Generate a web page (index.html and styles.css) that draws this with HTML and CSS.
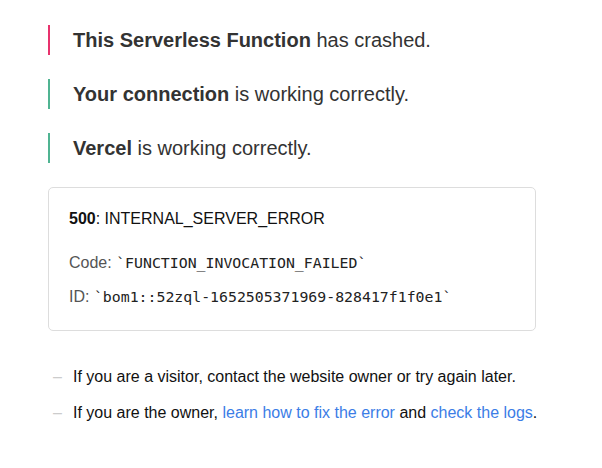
FILE: index.html
```html
<!DOCTYPE html>
<html>
<head>
<meta charset="utf-8">
<link rel="stylesheet" href="styles.css">
</head>
<body>
<main class="page">
  <section class="statuses">
    <p class="status status-bad"><strong>This Serverless Function</strong> has crashed.</p>
    <p class="status status-ok"><strong>Your connection</strong> is working correctly.</p>
    <p class="status status-ok"><strong>Vercel</strong> is working correctly.</p>
  </section>
  <section class="devinfo">
    <p class="error-code"><strong>500</strong>: INTERNAL_SERVER_ERROR</p>
    <p class="devinfo-line devinfo-code">Code: <code>`FUNCTION_INVOCATION_FAILED`</code></p>
    <p class="devinfo-line">ID: <code>`bom1::52zql-1652505371969-828417f1f0e1`</code></p>
  </section>
  <ul class="help">
    <li>If you are a visitor, contact the website owner or try again later.</li>
    <li>If you are the owner, <a href="#">learn how to fix the error</a> and <a href="#">check the logs</a>.</li>
  </ul>
</main>
</body>
</html>
```

FILE: styles.css
```css
html, body {
  margin: 0;
  padding: 0;
  background: #fff;
}
body {
  font-family: "Liberation Sans", Arial, sans-serif;
  color: #333;
}
.page {
  width: 488px;
  margin-left: 48px;
  padding-top: 25px;
}
.statuses {
  display: flex;
  flex-direction: column;
  gap: 24px;
}
.status {
  margin: 0;
  height: 30px;
  line-height: 30px;
  padding-left: 23px;
  border-left: 2px solid #50b492;
  font-size: 20px;
  color: #333;
}
.status strong {
  font-weight: bold;
}
.status-bad {
  border-left-color: #e8336d;
}
.devinfo {
  margin-top: 24px;
  border: 1px solid #ddd;
  border-radius: 5px;
  padding: 20px;
  height: 102px;
}
.error-code {
  margin: 0;
  font-size: 16px;
  line-height: 22px;
  color: #111;
}
.devinfo-line {
  margin: 12px 0 0 0;
  font-size: 16px;
  line-height: 22px;
  color: #555;
}
.devinfo-code {
  margin-top: 22px;
}
.devinfo-line code {
  font-family: "DejaVu Sans Mono", monospace;
  font-size: 14.85px;
  color: #222;
}
.help {
  list-style: none;
  margin: 35px 0 0 0;
  padding: 0 0 0 5px;
}
.help li {
  position: relative;
  font-size: 16px;
  line-height: 22px;
  color: #111;
  padding-left: 20px;
  margin-bottom: 14px;
  white-space: nowrap;
}
.help li::before {
  content: "\2013";
  position: absolute;
  left: 0;
  color: #ccc;
}
.help a {
  color: #3b7de6;
  text-decoration: none;
}
```
